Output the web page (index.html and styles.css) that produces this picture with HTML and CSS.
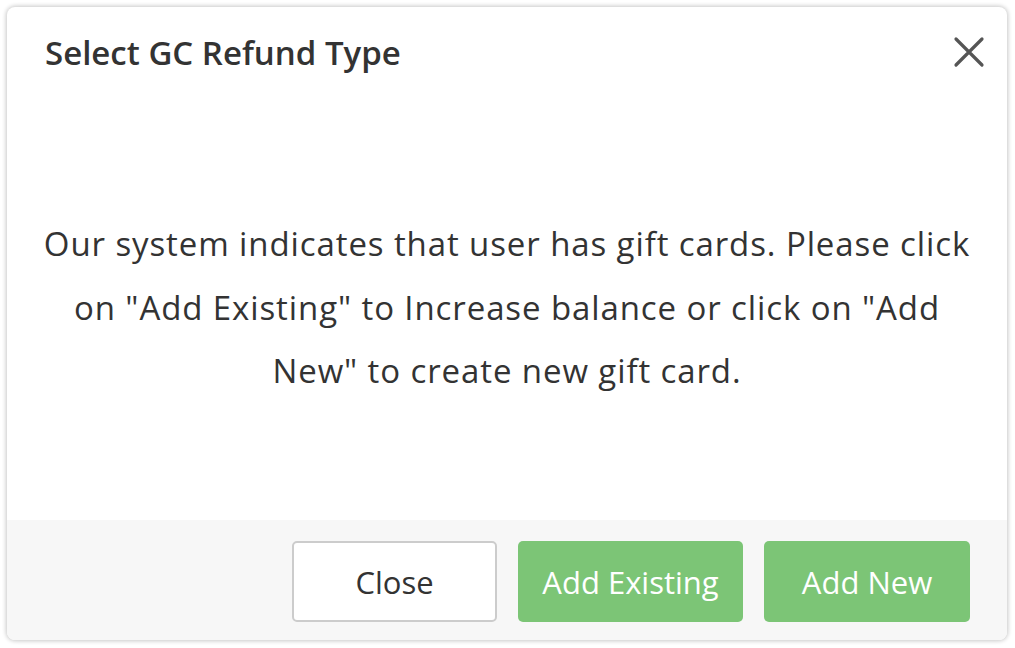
FILE: index.html
```html
<!DOCTYPE html>
<html lang="en">
<head>
<meta charset="utf-8">
<title>Select GC Refund Type</title>
<link rel="stylesheet" href="styles.css">
</head>
<body>
<div class="modal">
  <div class="modal-header">
    <h1 class="modal-title">Select GC Refund Type</h1>
    <button class="close-x" aria-label="Close">
      <svg width="32" height="32" viewBox="0 0 32 32"><path d="M3 3 L29 29 M29 3 L3 29" stroke="#555" stroke-width="3.2" stroke-linecap="round" fill="none"/></svg>
    </button>
  </div>
  <div class="modal-body">
    <p class="message">Our system indicates that user has gift cards. Please click on "Add Existing" to Increase balance or click on "Add New" to create new gift card.</p>
  </div>
  <div class="modal-footer">
    <button class="btn btn-default btn-close">Close</button>
    <button class="btn btn-green btn-existing">Add Existing</button>
    <button class="btn btn-green btn-new">Add New</button>
  </div>
</div>
</body>
</html>
```
FILE: styles.css
```css
html, body {
  margin: 0;
  background: #ffffff;
}
body {
  padding: 7px 8px 8px 7px;
  font-family: "Open Sans", "Lato", sans-serif;
  color: #333;
}
.modal {
  width: 1000px;
  height: 633px;
  background: #fff;
  border-radius: 8px;
  box-shadow: 0 0 4px 1px rgba(0,0,0,0.22);
  display: flex;
  flex-direction: column;
  overflow: hidden;
}
.modal-header {
  display: flex;
  justify-content: space-between;
  align-items: center;
  padding: 14px 22px 0 38px;
  height: 62px;
}
.modal-title {
  margin: 0;
  font-size: 33px;
  font-weight: 600;
  color: #333;
}
.close-x {
  border: none;
  background: none;
  padding: 0;
  width: 32px;
  height: 32px;
  display: flex;
}
.modal-body {
  flex: 1;
  display: flex;
  align-items: center;
  justify-content: center;
  padding: 12px 20px 0;
}
.message {
  margin: 0;
  max-width: 935px;
  text-align: center;
  font-size: 33px;
  letter-spacing: 0.9px;
  line-height: 63.5px;
  color: #333;
}
.modal-footer {
  height: 120px;
  background: #f7f7f7;
  display: flex;
  justify-content: flex-end;
  align-items: flex-start;
  gap: 21px;
  padding: 21px 37px 0 0;
  box-sizing: border-box;
}
.btn {
  height: 81px;
  border-radius: 5px;
  font-family: inherit;
  font-size: 31px;
  padding: 0;
}
.btn-default {
  background: #fff;
  border: 2px solid #ccc;
  color: #333;
}
.btn-green {
  background: #7cc576;
  border: none;
  color: #fff;
}
.btn-close { width: 205px; }
.btn-existing { width: 225px; }
.btn-new { width: 206px; }
```
